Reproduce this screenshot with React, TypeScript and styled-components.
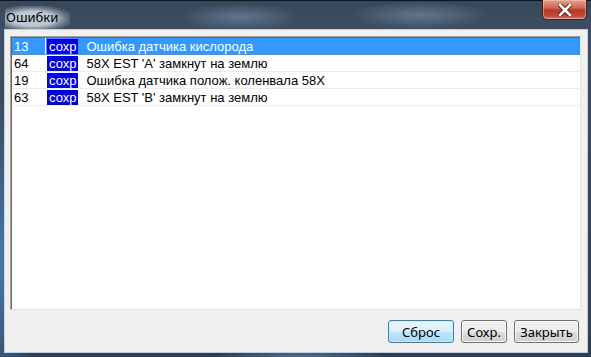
import styled, { createGlobalStyle } from "styled-components";

const GlobalStyle = createGlobalStyle`
  html, body {
    margin: 0;
    padding: 0;
    background: #1c2530;
  }
`;

type ErrorRow = { code: string; text: string };

const errors: ErrorRow[] = [
  { code: "13", text: "Ошибка датчика кислорода" },
  { code: "64", text: "58X EST 'A' замкнут на землю" },
  { code: "19", text: "Ошибка датчика полож. коленвала 58X" },
  { code: "63", text: "58X EST 'B' замкнут на землю" },
];

const Window = styled.div`
  width: 591px;
  height: 357px;
  box-sizing: border-box;
  display: flex;
  flex-direction: column;
  padding: 0 4px 5px 5px;
  border-top: 1px solid #10161d;
  background:
    radial-gradient(ellipse 40px 160px at 0 260px, rgba(80, 140, 200, 0.75), rgba(80, 140, 200, 0) 100%),
    radial-gradient(ellipse 60px 14px at 240px 16px, rgba(130, 150, 175, 0.55), rgba(130, 150, 175, 0) 100%),
    radial-gradient(ellipse 70px 14px at 420px 14px, rgba(140, 160, 185, 0.5), rgba(140, 160, 185, 0) 100%),
    radial-gradient(ellipse 90px 10px at 300px 357px, rgba(110, 150, 200, 0.6), rgba(110, 150, 200, 0) 100%),
    linear-gradient(180deg, #36475a 0%, #3f5065 10%, #34455a 60%, #2f3e50 100%);
`;

const TitleBar = styled.div`
  height: 29px;
  display: flex;
  align-items: flex-start;
`;

const Title = styled.span`
  margin-top: 5px;
  padding: 2px 12px 3px 1px;
  font-family: "Noto Sans", "Open Sans", sans-serif;
  font-size: 13px;
  color: #000;
  background: radial-gradient(ellipse at 42% 55%, rgba(205, 214, 224, 0.9) 40%, rgba(170, 182, 198, 0.45) 62%, rgba(150, 165, 185, 0) 80%);
`;

const CloseButton = styled.div`
  margin-left: auto;
  margin-top: -1px;
  width: 45px;
  height: 20px;
  box-sizing: border-box;
  border: 1px solid #4a1e18;
  border-top: none;
  border-radius: 0 0 5px 5px;
  display: flex;
  align-items: center;
  justify-content: center;
  background: linear-gradient(180deg, #e3a08f 0%, #d06a55 40%, #b7372a 55%, #c54a37 85%, #d9826a 100%);
  box-shadow: inset 0 0 0 1px rgba(255, 210, 200, 0.45);
`;

const Client = styled.div`
  flex: 1;
  display: flex;
  flex-direction: column;
  background: #f0f0f0;
  padding: 6px 6px 9px 5px;
  box-shadow: 0 0 0 1px rgba(235, 240, 246, 0.8);
`;

const ListBox = styled.div`
  flex: 1;
  background: #fff;
  padding-top: 1px;
  border-style: solid;
  border-width: 1px;
  border-color: #a0a0a0 #e3e3e3 #e3e3e3 #a0a0a0;
  box-shadow: inset 1px 1px 0 #696969;
  font-family: "Liberation Sans", Arial, sans-serif;
  font-size: 13px;
`;

const Row = styled.div<{ $selected?: boolean }>`
  height: 17px;
  box-sizing: border-box;
  display: flex;
  align-items: center;
  margin-left: 1px;
  border-bottom: 1px solid ${(p) => (p.$selected ? "#3399ff" : "#ececec")};
  background: ${(p) => (p.$selected ? "#3399ff" : "transparent")};
  color: ${(p) => (p.$selected ? "#fff" : "#000")};
`;

const Code = styled.div<{ $selected?: boolean }>`
  width: 34px;
  height: 100%;
  box-sizing: border-box;
  padding-left: 2px;
  display: flex;
  align-items: center;
  border-right: 1px solid ${(p) => (p.$selected ? "#ffffff" : "transparent")};
`;

const Badge = styled.span`
  margin-left: 1px;
  height: 15px;
  line-height: 15px;
  padding: 0 2px;
  background: #0000e0;
  color: #fff;
`;

const Message = styled.span`
  margin-left: 8px;
  white-space: nowrap;
`;

const Footer = styled.div`
  display: flex;
  justify-content: flex-end;
  gap: 7px;
  margin-top: 10px;
  padding-right: 2px;
`;

const Button = styled.button<{ $w: number; $default?: boolean }>`
  width: ${(p) => p.$w}px;
  height: 23px;
  box-sizing: border-box;
  padding: 0;
  font-family: "Noto Sans", "Open Sans", sans-serif;
  font-size: 13px;
  color: #000;
  border-radius: 3px;
  border: 1px solid ${(p) => (p.$default ? "#3c7fb1" : "#707070")};
  box-shadow: inset 0 0 0 1px ${(p) => (p.$default ? "rgba(200, 235, 255, 0.9)" : "rgba(255, 255, 255, 0.85)")};
  background: ${(p) =>
    p.$default
      ? "linear-gradient(180deg, #eaf6fd 0%, #d9f0fc 50%, #bee6fd 51%, #a7d9f5 100%)"
      : "linear-gradient(180deg, #f2f2f2 0%, #ebebeb 50%, #dddddd 51%, #cfcfcf 100%)"};
`;

function CloseIcon() {
  return (
    <svg width="14" height="12" viewBox="0 0 14 12">
      <path d="M2 1 L12 11 M12 1 L2 11" stroke="#5a1a12" strokeWidth="4.5" strokeLinecap="square" />
      <path d="M2 1 L12 11 M12 1 L2 11" stroke="#ffffff" strokeWidth="2.6" strokeLinecap="square" />
    </svg>
  );
}

export default function App() {
  return (
    <>
      <GlobalStyle />
      <Window>
        <TitleBar>
          <Title>Ошибки</Title>
          <CloseButton>
            <CloseIcon />
          </CloseButton>
        </TitleBar>
        <Client>
          <ListBox>
            {errors.map((e, i) => (
              <Row key={e.code} $selected={i === 0}>
                <Code $selected={i === 0}>{e.code}</Code>
                <Badge>сохр</Badge>
                <Message>{e.text}</Message>
              </Row>
            ))}
          </ListBox>
          <Footer>
            <Button $w={66} $default>Сброс</Button>
            <Button $w={46}>Сохр.</Button>
            <Button $w={65}>Закрыть</Button>
          </Footer>
        </Client>
      </Window>
    </>
  );
}
